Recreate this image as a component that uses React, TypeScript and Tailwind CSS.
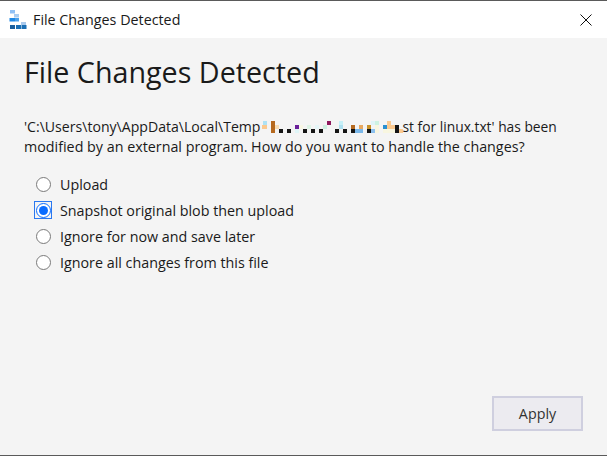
const pixels: [number, number, number, number, string][] = [
  // x, y, w, h, colour (relative to the redacted strip, origin 262,120)
  [2, 0, 4, 4, "#aee2f5"],
  [1, 4, 5, 4, "#fbc98f"],
  [10, 0, 4, 12, "#b5691f"],
  [14, 4, 4, 4, "#f7dcb4"],
  [18, 8, 4, 4, "#151515"],
  [26, 8, 4, 4, "#151515"],
  [34, 4, 4, 4, "#6a1f9a"],
  [34, 8, 4, 4, "#dff5f7"],
  [38, 4, 4, 4, "#f8f6e4"],
  [42, 8, 4, 4, "#151515"],
  [46, 4, 4, 4, "#def4e6"],
  [50, 8, 4, 4, "#151515"],
  [54, 4, 4, 4, "#e4f5f7"],
  [58, 8, 4, 4, "#151515"],
  [62, 4, 4, 4, "#cdf2e2"],
  [66, 0, 4, 4, "#8e1a5e"],
  [74, 8, 4, 4, "#151515"],
  [78, 0, 4, 4, "#c6f0f8"],
  [78, 4, 4, 4, "#aee0f0"],
  [82, 8, 4, 4, "#151515"],
  [90, 4, 4, 4, "#b5691f"],
  [90, 8, 4, 4, "#151515"],
  [94, 8, 4, 4, "#7ab8ea"],
  [98, 4, 4, 4, "#e8a860"],
  [98, 8, 4, 4, "#7ab8ea"],
  [106, 4, 4, 4, "#c9922a"],
  [106, 8, 4, 4, "#151515"],
  [110, 8, 4, 4, "#8cc0ee"],
  [110, 0, 4, 4, "#e0f4f8"],
  [114, 0, 4, 4, "#cdf2e2"],
  [114, 4, 4, 8, "#f8f6e0"],
  [122, 4, 4, 4, "#2a8fd0"],
  [122, 8, 4, 4, "#f8f6e0"],
  [126, 0, 4, 4, "#fbc98f"],
  [126, 4, 8, 4, "#fbc98f"],
  [126, 8, 8, 4, "#f8f6e0"],
  [134, 4, 4, 8, "#151515"],
  [138, 8, 4, 4, "#fbc98f"],
];

function AppGlyph() {
  return (
    <svg width="18" height="19" viewBox="0 0 18 19" className="shrink-0">
      <rect x="1" y="0" width="5" height="3.5" fill="#8fc0f5" />
      <rect x="5" y="4" width="5" height="3.5" fill="#a9cdf2" />
      <rect x="0.5" y="8" width="5.5" height="3.5" fill="#1e88e5" />
      <rect x="6" y="8" width="4" height="3.5" fill="#4aa0ea" />
      <rect x="12" y="12" width="5" height="3" fill="#a9c9ec" />
      <rect x="1" y="15" width="5" height="4" fill="#1a5f9e" />
      <rect x="7" y="15" width="5" height="4" fill="#1a6fb5" />
      <rect x="12.5" y="15" width="5" height="4" fill="#1a6fb5" />
    </svg>
  );
}

function Radio({ label, checked }: { label: string; checked?: boolean }) {
  return (
    <div className="flex items-center h-[26px] ml-[10px]">
      <div className={"w-[18px] h-[18px] flex items-center justify-center " + (checked ? "border-[1.5px] border-[#2a78f0]" : "")}>
        <div className={"w-[15px] h-[15px] rounded-full border-[1.5px] flex items-center justify-center bg-white " + (checked ? "border-[#0a6cff]" : "border-[#7a7a7a]")}>
          {checked && <div className="w-[9px] h-[9px] rounded-full bg-[#0a6cff]" />}
        </div>
      </div>
      <span className="ml-[8px] pt-[2px] text-[14.3px]">{label}</span>
    </div>
  );
}

export default function App() {
  return (
    <div className="w-[607px] h-[456px] flex flex-col bg-[#f4f4f4] text-[#1a1a1a] border-t border-b border-[#5a5a5a]" style={{ fontFamily: '"Open Sans", "Noto Sans", sans-serif' }}>
      <div className="h-[37px] bg-white flex items-center pl-[9px] shrink-0">
        <AppGlyph />
        <span className="ml-[6px] text-[14.3px]">File Changes Detected</span>
        <svg width="12" height="12" viewBox="0 0 12 12" className="ml-auto mr-[15px]">
          <path d="M0.5 0.5 L11.5 11.5 M11.5 0.5 L0.5 11.5" stroke="#111" strokeWidth="1" fill="none" />
        </svg>
      </div>

      <div className="flex-1 flex flex-col pl-[24px] pr-[24px]">
        <h1 className="text-[28.7px] leading-[38px] mt-[15px]">File Changes Detected</h1>

        <div className="mt-[26px] text-[14.3px] leading-[20px]">
          <div className="flex items-center whitespace-nowrap">
            <span className="text-[14.1px]">'C:\Users\tony\AppData\Local\Temp</span>
            <svg width="142" height="12" viewBox="0 0 142 12" className="shrink-0">
              {pixels.map(([x, y, w, h, c], i) => (
                <rect key={i} x={x} y={y} width={w} height={h} fill={c} />
              ))}
            </svg>
            <span className="text-[13.8px]">st for linux.txt' has been</span>
          </div>
          <p>modified by an external program. How do you want to handle the changes?</p>
        </div>

        <div className="mt-[14px] flex flex-col">
          <Radio label="Upload" />
          <Radio label="Snapshot original blob then upload" checked />
          <Radio label="Ignore for now and save later" />
          <Radio label="Ignore all changes from this file" />
        </div>

        <div className="mt-auto mb-[24px] flex justify-end">
          <button className="w-[91px] h-[35px] bg-[#ecebf0] border-2 border-[#cfcfdf] text-[14.3px] text-[#333]">Apply</button>
        </div>
      </div>
    </div>
  );
}
